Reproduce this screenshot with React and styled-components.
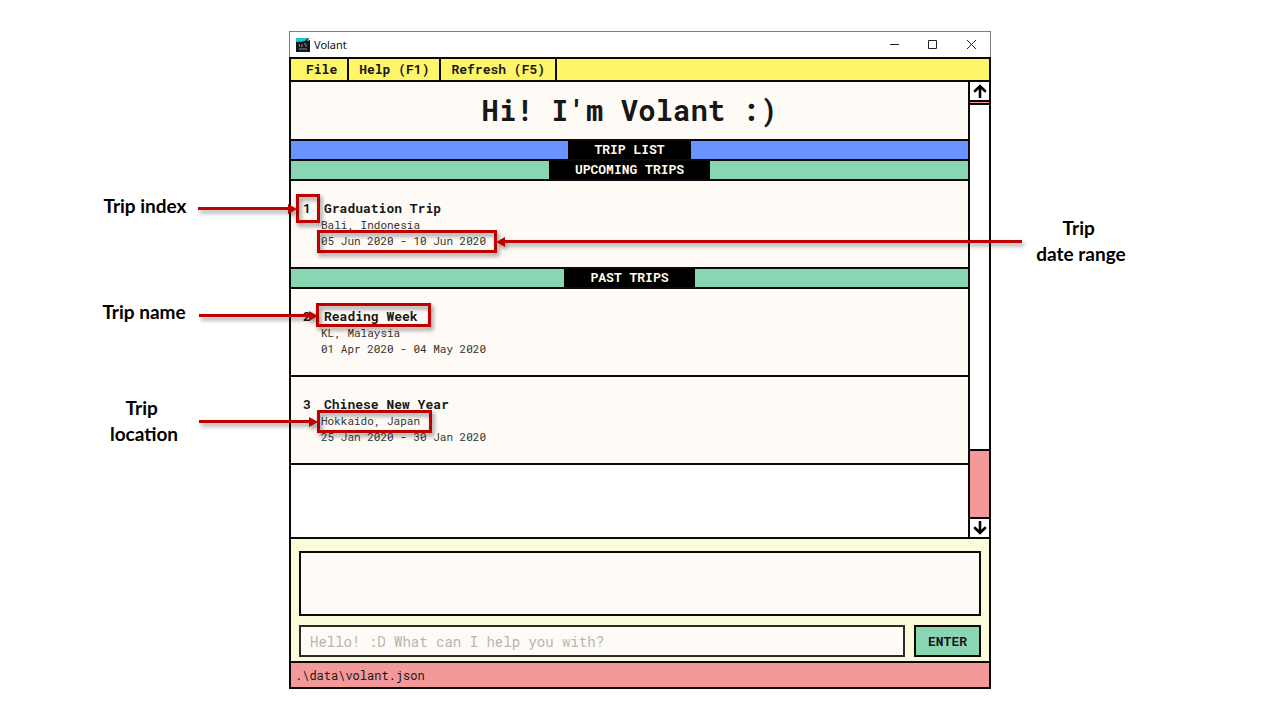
import React from "react";
import styled, { createGlobalStyle } from "styled-components";

const ink = "#0a0a0a";
const cream = "#fefbf6";
const mint = "#8ad6b3";
const pink = "#f39999";
const red = "#c00000";
const mono = '"Roboto Mono", "DejaVu Sans Mono", "Liberation Mono", monospace';

const GlobalStyle = createGlobalStyle`
  *, *::before, *::after { box-sizing: border-box; }
  body { margin: 0; background: #fff; color: #171717; font-family: ${mono}; }
  button, input { font-family: inherit; color: inherit; margin: 0; border-radius: 0; }
`;

const Page = styled.main`
  display: flex;
  justify-content: center;
  padding: 31px 0;
`;

const Figure = styled.div`
  position: relative;
  width: 100%;
  max-width: 702px;
`;

const Window = styled.section`
  display: flex;
  flex-direction: column;
`;

const TitleBar = styled.header`
  display: flex;
  align-items: center;
  height: 26px;
  padding: 0 13px 0 6px;
  gap: 4px;
  border: 1px solid #7d7d7d;
  border-bottom: 0;
  background: #fff;
  font: 11px/16px "Noto Sans", "Open Sans", sans-serif;
  color: #111;
`;

const WindowControls = styled.div`
  display: flex;
  gap: 26px;
  margin-left: auto;
`;

const IconButton = styled.button`
  display: flex;
  align-items: center;
  justify-content: center;
  width: 12px;
  height: 12px;
  padding: 0;
  border: 0;
  background: transparent;
`;

const AppBody = styled.div`
  display: flex;
  flex-direction: column;
  border: 2px solid ${ink};
`;

const MenuBar = styled.nav`
  display: flex;
  height: 21px;
  padding-left: 5px;
  background: #fff568;
`;

const MenuItem = styled.button`
  padding: 0 10px 2px;
  border: 0;
  border-right: 2px solid ${ink};
  background: transparent;
  font-size: 13px;
  line-height: 18px;
  font-weight: 700;
`;

const Content = styled.div`
  display: flex;
  min-height: 457px;
  border-top: 2px solid ${ink};
`;

const TripPane = styled.div`
  flex: 1;
  min-width: 0;
`;

const Greeting = styled.h1`
  margin: 0;
  height: 57px;
  background: ${cream};
  text-align: center;
  font-size: 29px;
  line-height: 56px;
  font-weight: 700;
`;

const Band = styled.h2`
  display: flex;
  justify-content: center;
  margin: 0;
  border-top: 2px solid ${ink};
  background: ${(p) => p.$color};
  font-size: 13px;
  line-height: 16px;
  font-weight: 700;
`;

const BandLabel = styled.span`
  padding: 0 26px 2px;
  background: #000;
  color: #fffbe8;
`;

const TripList = styled.ol`
  margin: 0;
  padding: 0;
  list-style: none;
`;

const TripRow = styled.li`
  display: flex;
  min-height: 88px;
  padding: 18px 12px;
  border-top: 2px solid ${ink};
  background: ${cream};
`;

const TripIndex = styled.span`
  width: 18px;
  font-size: 13px;
  line-height: 18px;
  font-weight: 700;
`;

const TripName = styled.h3`
  margin: 0 0 0 3px;
  font-size: 13px;
  line-height: 18px;
  font-weight: 700;
`;

const TripDetail = styled.p`
  margin: 0;
  font-size: 11px;
  line-height: 16px;
  color: #333;
`;

const ListEnd = styled.div`
  border-top: 2px solid ${ink};
`;

const ScrollBar = styled.div`
  display: flex;
  flex-direction: column;
  width: 21px;
  border-left: 2px solid ${ink};
`;

const ScrollButton = styled(IconButton)`
  width: 100%;
  height: 18px;
  background: #fff;
`;

const Track = styled.div`
  flex: 1;
  padding-top: 1px;
  border: solid ${ink};
  border-width: 2px 0;
  background: ${pink};
`;

const Thumb = styled.div`
  height: 84%;
  border: solid ${ink};
  border-width: 2px 0;
  background: #fff;
`;

const CommandArea = styled.form`
  display: flex;
  flex-direction: column;
  gap: 9px;
  padding: 12px 8px 4px;
  border-top: 2px solid ${ink};
  background: #fbfbdc;
`;

const Result = styled.output`
  height: 65px;
  border: 2px solid ${ink};
  background: ${cream};
`;

const CommandRow = styled.div`
  display: flex;
  gap: 9px;
`;

const CommandInput = styled.input`
  flex: 1;
  min-width: 0;
  height: 32px;
  padding: 0 9px;
  border: 2px solid #2b2b2b;
  background: ${cream};
  font-size: 14px;
  &::placeholder { color: #b5b5b3; opacity: 1; }
`;

const EnterButton = styled.button`
  width: 67px;
  padding: 0;
  border: 2px solid ${ink};
  background: ${mint};
  font-size: 13px;
  font-weight: 700;
`;

const StatusBar = styled.footer`
  height: 26px;
  padding: 0 4px;
  border-top: 2px solid ${ink};
  background: ${pink};
  font-size: 12px;
  line-height: 24px;
`;

/* Callouts float over the window, placed from its top left corner. */
const Mark = styled.div`
  position: absolute;
  left: ${(p) => p.$x}px;
  top: ${(p) => p.$y}px;
  width: ${(p) => p.$w}px;
  height: ${(p) => p.$h}px;
  border: 3px solid ${red};
  filter: drop-shadow(2px 3px 2px rgba(0, 0, 0, 0.45));
  pointer-events: none;
`;

const Arrow = styled.div`
  position: absolute;
  left: ${(p) => p.$x}px;
  top: ${(p) => p.$y}px;
  width: ${(p) => p.$w}px;
  height: 3px;
  background: linear-gradient(${red}, ${red}) no-repeat
    ${(p) => (p.$left ? "right" : "left")} / calc(100% - 5px) 100%;
  filter: drop-shadow(2px 3px 2px rgba(0, 0, 0, 0.4));
  pointer-events: none;

  &::after {
    content: "";
    position: absolute;
    top: -3px;
    ${(p) => (p.$left ? "left: 0;" : "right: 0;")}
    border: solid transparent;
    border-width: 5px 0;
    ${(p) => (p.$left ? "border-right" : "border-left")}: 9px solid ${red};
    height: 9px;
  }
`;

const Caption = styled.p`
  position: absolute;
  left: ${(p) => p.$x}px;
  top: ${(p) => p.$y}px;
  width: 110px;
  margin: 0;
  text-align: center;
  white-space: pre;
  font: 700 19px/26px Lato, "Open Sans", sans-serif;
  color: #000;
`;

const sections = [
  {
    title: "UPCOMING TRIPS",
    trips: [{ id: 1, name: "Graduation Trip", place: "Bali, Indonesia", dates: "05 Jun 2020 - 10 Jun 2020" }],
  },
  {
    title: "PAST TRIPS",
    trips: [
      { id: 2, name: "Reading Week", place: "KL, Malaysia", dates: "01 Apr 2020 - 04 May 2020" },
      { id: 3, name: "Chinese New Year", place: "Hokkaido, Japan", dates: "25 Jan 2020 - 30 Jan 2020" },
    ],
  },
];

const callouts = [
  { text: "Trip index", label: [-199, 162], box: [7, 163, 24, 29], arrow: [-91, 176, 99] },
  { text: "Trip \ndate range", label: [737, 184], box: [28, 199, 180, 23], arrow: [207, 209, 526], left: true },
  { text: "Trip name", label: [-200, 268], box: [27, 272, 115, 24], arrow: [-90, 283, 119] },
  { text: "Trip \nlocation", label: [-200, 364], box: [28, 379, 115, 23], arrow: [-90, 389, 119] },
];

function AppIcon() {
  return (
    <svg width="14" height="14" viewBox="0 0 14 14" aria-hidden="true">
      <rect width="14" height="14" fill="#15171c" />
      <path d="M0 0H12L9 3H0Z" fill="#19c5cf" />
      <path d="M0 3H8L6 4H0Z" fill="#e0508c" />
      <path d="M13 0H14V2L11 3Z" fill="#dff4f6" />
      <path d="M3 6l1 3M6 6v3M8 6h2v3M3 11h8" stroke="#a9acb2" strokeWidth="0.8" fill="none" />
    </svg>
  );
}

function ControlIcon({ d }) {
  return (
    <svg width="12" height="12" viewBox="0 0 12 12" aria-hidden="true">
      <path d={d} fill="none" stroke="#222" strokeWidth="1" />
    </svg>
  );
}

function ScrollIcon({ down }) {
  return (
    <svg width="14" height="14" viewBox="0 0 14 14" aria-hidden="true">
      <path
        d={down ? "M7 1V12M2 7L7 12L12 7" : "M7 13V2M2 7L7 2L12 7"}
        fill="none"
        stroke="#000"
        strokeWidth="2.6"
        strokeLinecap="round"
      />
    </svg>
  );
}

export default function App() {
  return (
    <Page>
      <GlobalStyle />
      <Figure>
        <Window aria-label="Volant">
          <TitleBar>
            <AppIcon />
            <span>Volant</span>
            <WindowControls>
              <IconButton aria-label="Minimize"><ControlIcon d="M1 5.5H10" /></IconButton>
              <IconButton aria-label="Maximize"><ControlIcon d="M1.5 1.5H9.5V9.5H1.5Z" /></IconButton>
              <IconButton aria-label="Close"><ControlIcon d="M2 1L11 10M11 1L2 10" /></IconButton>
            </WindowControls>
          </TitleBar>
          <AppBody>
            <MenuBar>
              <MenuItem>File</MenuItem>
              <MenuItem>Help (F1)</MenuItem>
              <MenuItem>Refresh (F5)</MenuItem>
            </MenuBar>
            <Content>
              <TripPane>
                <Greeting>Hi! I'm Volant :)</Greeting>
                <Band $color="#6b93ff"><BandLabel>TRIP LIST</BandLabel></Band>
                {sections.map((section) => (
                  <React.Fragment key={section.title}>
                    <Band $color={mint}><BandLabel>{section.title}</BandLabel></Band>
                    <TripList>
                      {section.trips.map((trip) => (
                        <TripRow key={trip.id}>
                          <TripIndex>{trip.id}</TripIndex>
                          <div>
                            <TripName>{trip.name}</TripName>
                            <TripDetail>{trip.place}</TripDetail>
                            <TripDetail>{trip.dates}</TripDetail>
                          </div>
                        </TripRow>
                      ))}
                    </TripList>
                  </React.Fragment>
                ))}
                <ListEnd />
              </TripPane>
              <ScrollBar>
                <ScrollButton aria-label="Scroll up"><ScrollIcon /></ScrollButton>
                <Track><Thumb /></Track>
                <ScrollButton aria-label="Scroll down"><ScrollIcon down /></ScrollButton>
              </ScrollBar>
            </Content>
            <CommandArea onSubmit={(e) => e.preventDefault()}>
              <Result aria-label="Result" />
              <CommandRow>
                <CommandInput aria-label="Command" placeholder="Hello! :D What can I help you with?" />
                <EnterButton type="submit">ENTER</EnterButton>
              </CommandRow>
            </CommandArea>
            <StatusBar>.\data\volant.json</StatusBar>
          </AppBody>
        </Window>
        {callouts.map(({ text, label, box, arrow, left }) => (
          <React.Fragment key={text}>
            <Mark $x={box[0]} $y={box[1]} $w={box[2]} $h={box[3]} />
            <Arrow $x={arrow[0]} $y={arrow[1]} $w={arrow[2]} $left={left} />
            <Caption $x={label[0]} $y={label[1]}>{text}</Caption>
          </React.Fragment>
        ))}
      </Figure>
    </Page>
  );
}
